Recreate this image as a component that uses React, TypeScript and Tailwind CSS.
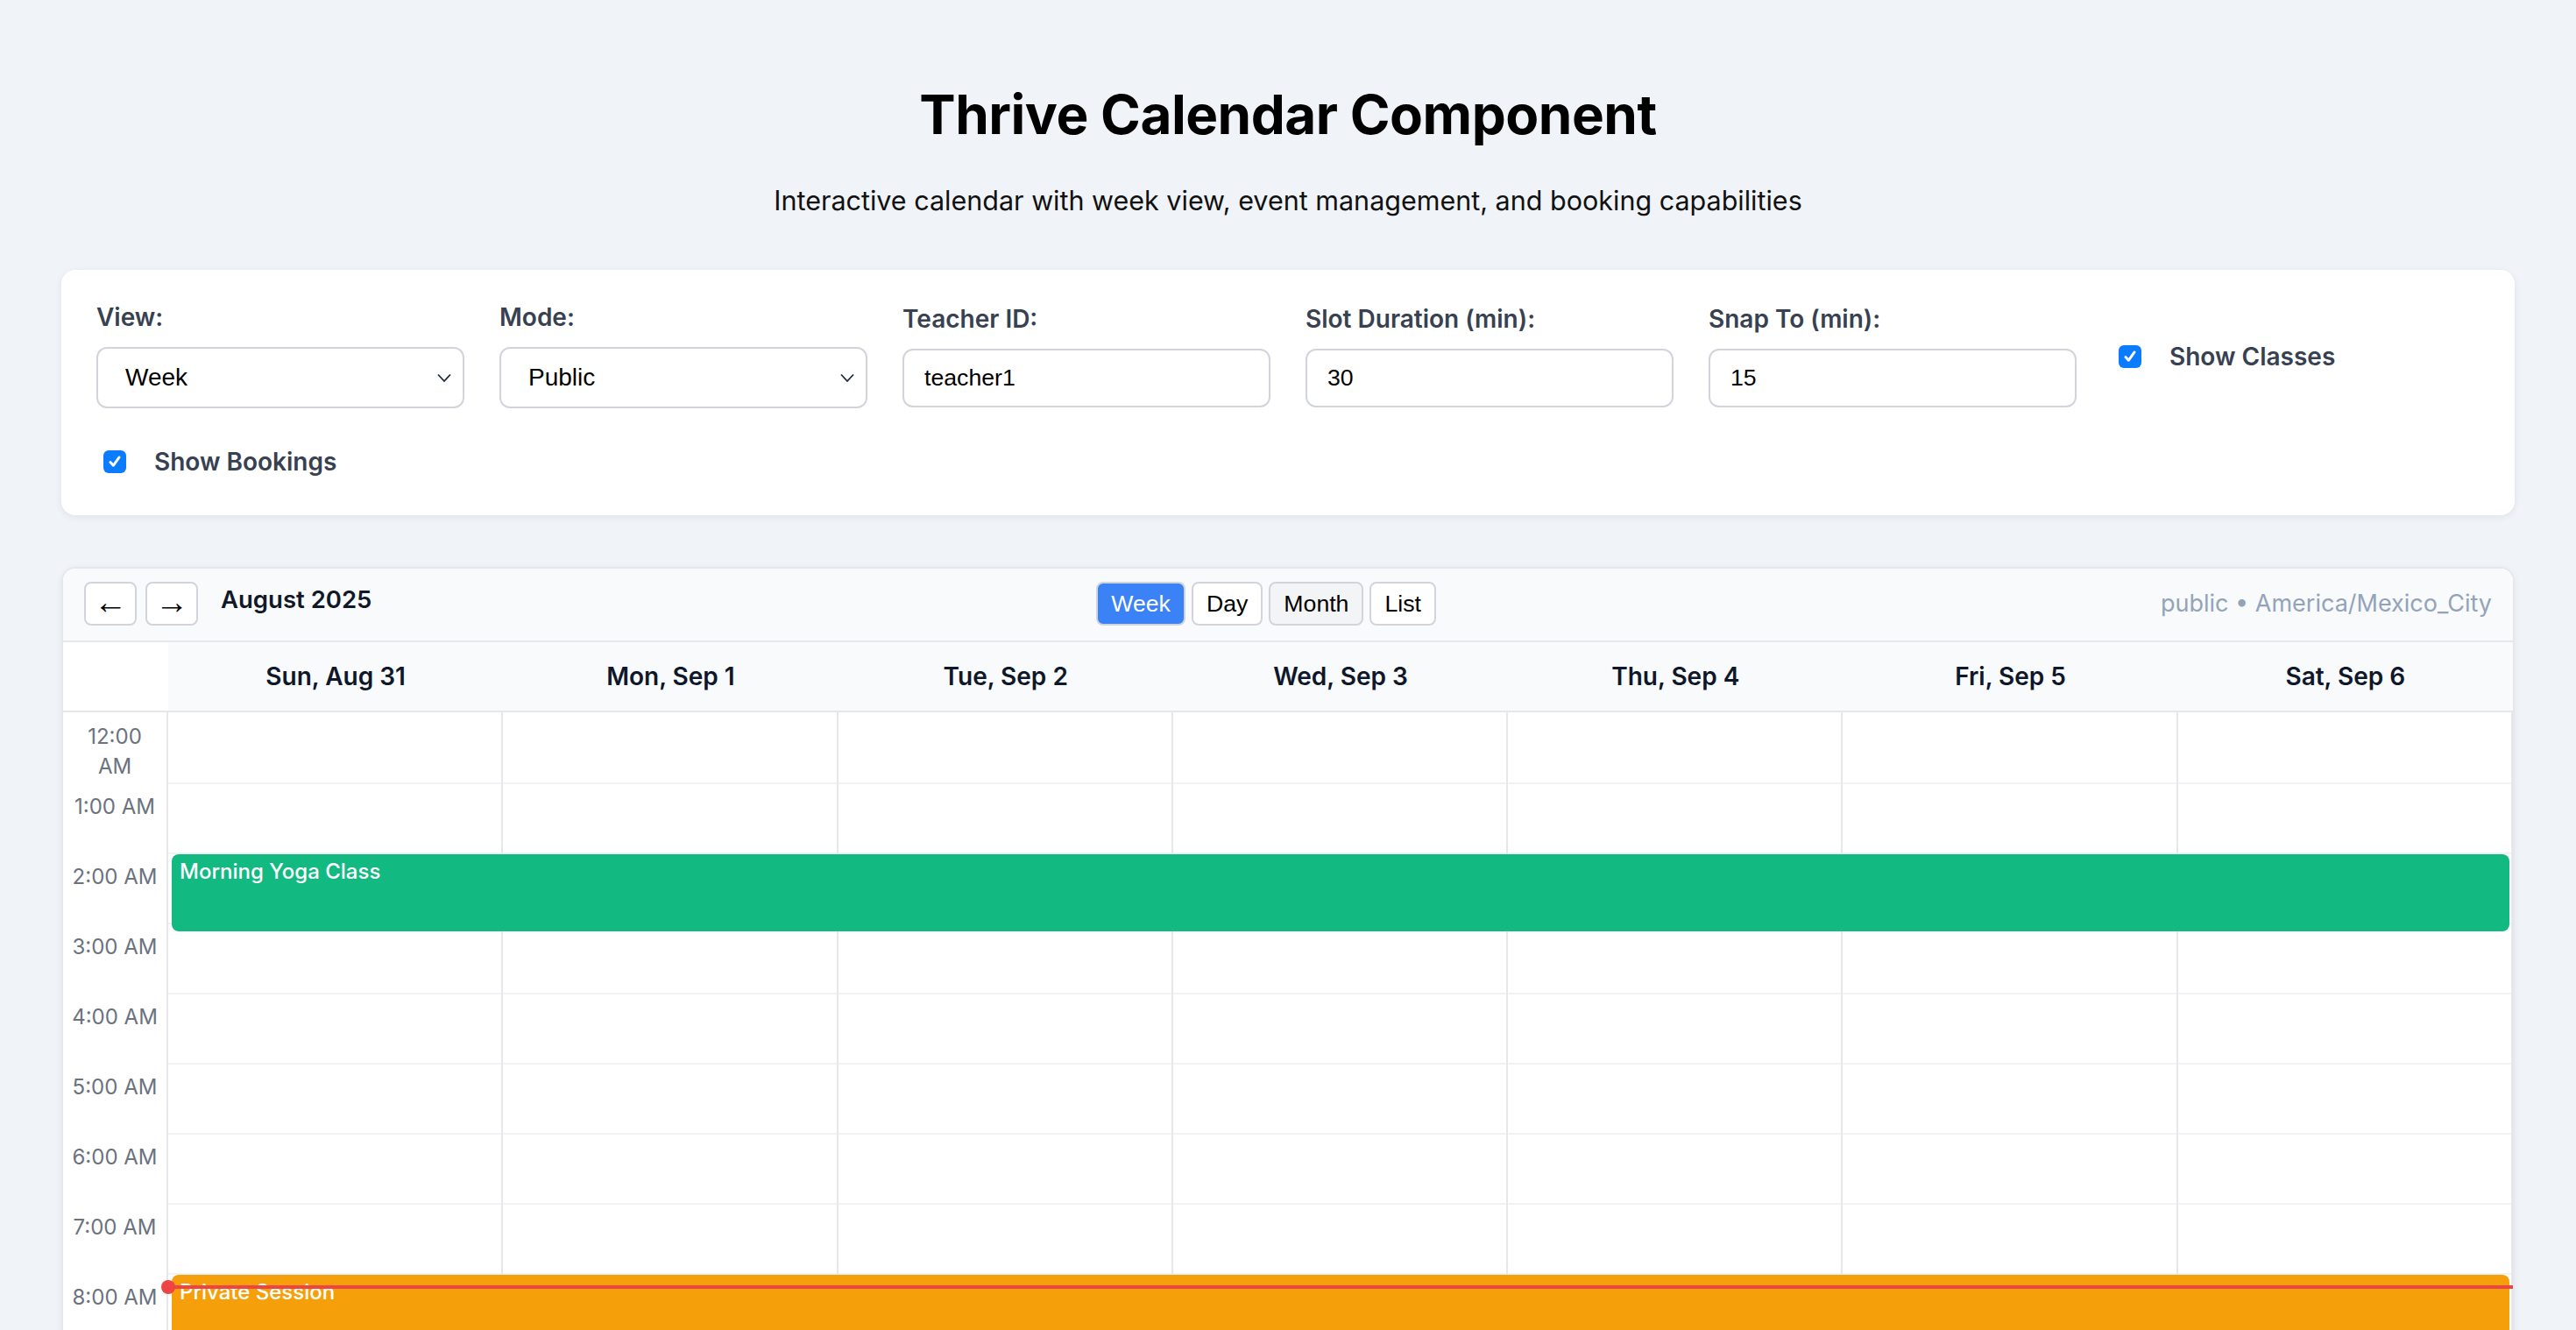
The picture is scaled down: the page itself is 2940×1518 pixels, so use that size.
import React, { useState } from "react";

const DAYS = [
  "Sun, Aug 31",
  "Mon, Sep 1",
  "Tue, Sep 2",
  "Wed, Sep 3",
  "Thu, Sep 4",
  "Fri, Sep 5",
  "Sat, Sep 6",
];

const HOURS = Array.from({ length: 24 }, (_, h) => {
  const suffix = h < 12 ? "AM" : "PM";
  const hr = h % 12 === 0 ? 12 : h % 12;
  return `${hr}:00 ${suffix}`;
});

const Chevron = () => (
  <svg
    className="absolute right-[14px] top-1/2 -translate-y-1/2 pointer-events-none"
    width="18"
    height="12"
    viewBox="0 0 18 12"
    fill="none"
  >
    <path d="M2 2.5 L9 10 L16 2.5" stroke="#1f2937" strokeWidth="1.8" />
  </svg>
);

const Check = ({ checked, onClick }: { checked: boolean; onClick: () => void }) => (
  <span
    onClick={onClick}
    className={`ml-[8px] mr-[32px] flex h-[26px] w-[26px] shrink-0 items-center justify-center rounded-[6px] ${
      checked ? "bg-[#0b7bff]" : "bg-white border-2 border-[#9ca3af]"
    }`}
  >
    {checked ? (
      <svg width="18" height="18" viewBox="0 0 16 16" fill="none">
        <path d="M3.5 8.5 L6.5 11.8 L12.5 3.5" stroke="white" strokeWidth="2.6" strokeLinecap="round" strokeLinejoin="round" />
      </svg>
    ) : null}
  </span>
);

const App: React.FC = () => {
  const [view, setView] = useState("week");
  const [mode, setMode] = useState("public");
  const [teacherId, setTeacherId] = useState("teacher1");
  const [slot, setSlot] = useState("30");
  const [snap, setSnap] = useState("15");
  const [showClasses, setShowClasses] = useState(true);
  const [showBookings, setShowBookings] = useState(true);
  const [calView, setCalView] = useState("Week");

  const labelCls = "block mb-[20px] text-[28px] leading-[28px] font-semibold text-[#374151]";
  const inputCls =
    "w-full h-[67px] rounded-[12px] border-2 border-[#d1d5db] bg-white px-[23px] text-[26.67px] text-black [font-family:'Liberation_Sans',Arial,sans-serif] outline-none";
  const selectCls =
    "w-full h-[70px] appearance-none rounded-[12px] border-2 border-[#d1d5db] bg-white pl-[31px] pr-[40px] text-[28px] text-black [font-family:'Liberation_Sans',Arial,sans-serif] outline-none";
  const btnCls =
    "h-[50px] rounded-[8px] border-2 border-[#d1d5db] px-[15px] text-[26.67px] leading-[30px] [font-family:'Liberation_Sans',Arial,sans-serif]";
  const navCls =
    "flex h-[50px] w-[60px] items-center justify-center rounded-[8px] border-2 border-[#d1d5db] bg-white pb-[5px] text-[38px] leading-none text-black [font-family:'Liberation_Sans',Arial,sans-serif]";

  return (
    <div className="min-h-screen bg-[#f0f4f8] [font-family:Inter,'Noto_Sans',sans-serif]">
      <div className="mx-auto max-w-[2800px] pt-[95px]">
        <h1 className="text-center text-[62px] leading-[72px] font-bold text-black tracking-[-0.5px]">
          Thrive Calendar Component
        </h1>
        <p className="mt-[38px] text-center text-[30.5px] leading-[48px] text-[#111]">
          Interactive calendar with week view, event management, and booking capabilities
        </p>

        {/* controls */}
        <div className="mt-[55px] grid grid-cols-6 items-center gap-[40px] rounded-[16px] bg-white p-[40px] shadow-[0_2px_8px_rgba(15,23,42,0.08)]">
          <div>
            <label className={labelCls}>View:</label>
            <div className="relative">
              <select className={selectCls} value={view} onChange={(e) => setView(e.target.value)}>
                <option value="week">Week</option>
                <option value="day">Day</option>
                <option value="month">Month</option>
              </select>
              <Chevron />
            </div>
          </div>
          <div>
            <label className={labelCls}>Mode:</label>
            <div className="relative">
              <select className={selectCls} value={mode} onChange={(e) => setMode(e.target.value)}>
                <option value="public">Public</option>
                <option value="teacher">Teacher</option>
                <option value="admin">Admin</option>
              </select>
              <Chevron />
            </div>
          </div>
          <div>
            <label className={labelCls}>Teacher ID:</label>
            <input className={inputCls} value={teacherId} onChange={(e) => setTeacherId(e.target.value)} />
          </div>
          <div>
            <label className={labelCls}>Slot Duration (min):</label>
            <input className={inputCls} value={slot} onChange={(e) => setSlot(e.target.value)} />
          </div>
          <div>
            <label className={labelCls}>Snap To (min):</label>
            <input className={inputCls} value={snap} onChange={(e) => setSnap(e.target.value)} />
          </div>
          <label className="flex items-center text-[28px] leading-[42px] font-semibold text-[#374151]">
            <Check checked={showClasses} onClick={() => setShowClasses((x) => !x)} />
            Show Classes
          </label>
          <label className="flex items-center text-[28px] leading-[42px] font-semibold text-[#374151]">
            <Check checked={showBookings} onClick={() => setShowBookings((x) => !x)} />
            Show Bookings
          </label>
        </div>

        {/* calendar */}
        <div className="mt-[59px] overflow-hidden rounded-[16px] border-2 border-[#e5e7eb] bg-white shadow-[0_2px_8px_rgba(15,23,42,0.06)]">
          <div className="flex items-center justify-between border-b-2 border-[#e5e7eb] bg-[#f8fafc] px-[24px] pt-[15px] pb-[17px]">
            <div className="flex items-center">
              <button className={navCls}>←</button>
              <button className={`${navCls} ml-[10px]`}>→</button>
              <span className="ml-[26px] -mt-[8px] text-[27.5px] font-semibold text-[#111827]">August 2025</span>
            </div>
            <div className="flex items-center gap-[7px]">
              {["Week", "Day", "Month", "List"].map((v) => (
                <button
                  key={v}
                  onClick={() => setCalView(v)}
                  className={`${btnCls} ${
                    calView === v
                      ? "bg-[#3b82f6] text-white"
                      : v === "Month"
                      ? "bg-[#f3f4f6] text-black"
                      : "bg-white text-black"
                  }`}
                >
                  {v}
                </button>
              ))}
            </div>
            <span className="text-[27px] text-[#94a3b8]">
              {mode} • America/Mexico_City
            </span>
          </div>

          {/* day header */}
          <div className="grid grid-cols-[120px_repeat(7,minmax(0,1fr))] border-b-2 border-[#e5e7eb]">
            <div className="h-[78px] bg-white" />
            {DAYS.map((d) => (
              <div
                key={d}
                className="flex h-[78px] items-center justify-center bg-[#f8fafc] text-[28px] font-semibold text-[#0f172a]"
              >
                {d}
              </div>
            ))}
          </div>

          {/* body */}
          <div className="relative grid grid-cols-[120px_repeat(7,minmax(0,1fr))]">
            <div className="border-r-2 border-[#e5e7eb]">
              {HOURS.map((h) => (
                <div
                  key={h}
                  className="h-[80px] px-[10px] pt-[11px] text-center text-[24px] leading-[34px] text-[#6b7280]"
                >
                  {h}
                </div>
              ))}
            </div>
            {DAYS.map((d) => (
              <div key={d} className="border-r-2 border-[#e5e7eb] last:border-r-0">
                {HOURS.map((h) => (
                  <div key={h} className="h-[80px] border-t-2 border-[#f1f2f4] first:border-t-0" />
                ))}
              </div>
            ))}

            {showClasses ? (
              <div className="absolute left-[124px] right-[4px] top-[162px] h-[88px] rounded-[8px] bg-[#12b981] px-[9px] pt-[5px] text-[24px] leading-[30px] font-medium text-white">
                Morning Yoga Class
              </div>
            ) : null}
            {showBookings ? (
              <div className="absolute left-[124px] right-[4px] top-[642px] h-[160px] rounded-[8px] bg-[#f59f0b] px-[9px] pt-[5px] text-[24px] leading-[30px] font-medium text-white">
                Private Session
              </div>
            ) : null}

            {/* now line */}
            <div className="absolute left-[120px] right-0 top-[654px] z-10 h-[4px] bg-[#ef4444]" />
            <div className="absolute left-[112px] top-[648px] z-10 h-[16px] w-[16px] rounded-full bg-[#ef4444]" />
          </div>
        </div>
      </div>
    </div>
  );
};

export default App;
